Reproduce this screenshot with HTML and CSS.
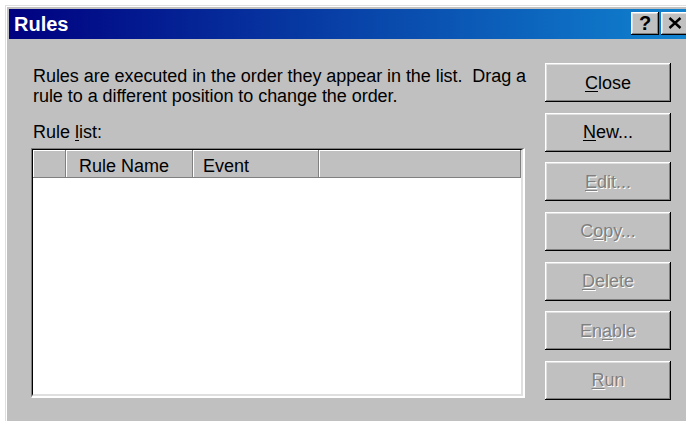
FILE: index.html
```html
<!DOCTYPE html>
<html lang="en">
<head>
<meta charset="utf-8">
<title>Rules</title>
<link rel="stylesheet" href="styles.css">
</head>
<body>
<div class="window">
  <div class="titlebar">
    <span class="title">Rules</span>
    <div class="caption-btns">
      <button class="cap-btn cap-help" type="button">?</button>
      <button class="cap-btn cap-close" type="button" aria-label="Close">
        <svg width="14" height="12" viewBox="0 0 14 12"><path d="M1.5 1 L12.5 11 M12.5 1 L1.5 11" stroke="#000" stroke-width="2.4" fill="none"/></svg>
      </button>
    </div>
  </div>
  <div class="dialog">
    <div class="main">
      <p class="intro">Rules are executed in the order they appear in the list.&nbsp; Drag a<br>rule to a different position to change the order.</p>
      <div class="label">Rule <u>l</u>ist:</div>
      <div class="listview">
        <div class="lv-inner">
          <div class="lv-header">
            <div class="col col-icon"></div>
            <div class="col col-name">Rule Name</div>
            <div class="col col-event">Event</div>
            <div class="col col-fill"></div>
          </div>
          <div class="lv-body"></div>
        </div>
      </div>
    </div>
    <div class="actions">
      <button class="btn" type="button"><u>C</u>lose</button>
      <button class="btn" type="button"><u>N</u>ew...</button>
      <button class="btn" type="button" disabled><u>E</u>dit...</button>
      <button class="btn" type="button" disabled>C<u>o</u>py...</button>
      <button class="btn" type="button" disabled><u>D</u>elete</button>
      <button class="btn" type="button" disabled>En<u>a</u>ble</button>
      <button class="btn" type="button" disabled><u>R</u>un</button>
    </div>
  </div>
</div>
</body>
</html>
```

FILE: styles.css
```css
html, body {
  margin: 0;
  height: 100%;
  overflow: hidden;
  background: #fff;
}

body {
  font-family: "Liberation Sans", Arial, sans-serif;
  color: #000;
}

/* window frame */
.window {
  margin: 5px 0 0 5px;
  width: 690px;
  height: 416px;
  box-sizing: border-box;
  border: 1px solid #dfdfdf;
  border-bottom: 0;
  box-shadow: inset 1px 1px #fff;
  padding: 3px;
  background: #c0c0c0;
}

.titlebar {
  height: 30px;
  background: linear-gradient(90deg, #000080, #1084d0);
  display: flex;
  justify-content: space-between;
  align-items: flex-start;
}

.title {
  color: #fff;
  font-weight: bold;
  font-size: 20px;
  line-height: 30px;
  padding-left: 5px;
}

.caption-btns {
  display: flex;
  gap: 2px;
  margin-top: 3px;
  margin-right: 2px;
}

.cap-btn {
  width: 28px;
  height: 23px;
  padding: 0;
  border: 0;
  background: #c0c0c0;
  box-shadow: inset -1px -1px #000, inset 1px 1px #fff, inset -2px -2px #808080, inset 2px 2px #dfdfdf;
  display: flex;
  align-items: center;
  justify-content: center;
  font-family: "Liberation Sans", Arial, sans-serif;
}

.cap-help {
  font-weight: bold;
  font-size: 20px;
  line-height: 1;
  color: #000;
  padding-bottom: 1px;
}

.cap-close svg {
  display: block;
  margin-top: -1px;
}

/* dialog body */
.dialog {
  display: flex;
  padding-left: 22px;
}

.main {
  width: 494px;
  padding-top: 27px;
}

.intro {
  margin: 0;
  padding-left: 2px;
  font-size: 18px;
  line-height: 20px;
  letter-spacing: -0.05px;
  white-space: nowrap;
}

.label {
  margin-top: 16px;
  padding-left: 2px;
  font-size: 18px;
  line-height: 20px;
}

u {
  text-decoration-thickness: 1px;
  text-underline-offset: 2px;
}

/* list view */
.listview {
  margin-top: 6px;
  height: 250px;
  box-sizing: border-box;
  border-style: solid;
  border-width: 1px 2px 2px 1px;
  border-color: #808080 #fff #fff #808080;
}

.lv-inner {
  height: 100%;
  box-sizing: border-box;
  border-style: solid;
  border-width: 1px 2px 2px 1px;
  border-color: #000 #dfdfdf #dfdfdf #000;
  background: #fff;
  display: flex;
  flex-direction: column;
}

.lv-header {
  display: flex;
  height: 28px;
  background: #c0c0c0;
}

.col {
  box-sizing: border-box;
  height: 28px;
  box-shadow: inset -1px -1px #808080, inset 1px 1px #fff;
  font-size: 18px;
  line-height: 28px;
  padding-top: 2px;
  white-space: nowrap;
}

.col-icon { width: 33px; }
.col-name { width: 127px; padding-left: 13px; }
.col-event { width: 126px; padding-left: 10px; }
.col-fill { flex: 1; }

.lv-body {
  flex: 1;
}

/* command buttons */
.actions {
  margin-left: 20px;
  padding-top: 24px;
  display: flex;
  flex-direction: column;
  gap: 10.67px;
}

.btn {
  width: 126px;
  height: 39px;
  padding: 0;
  border: 0;
  background: #c0c0c0;
  box-shadow: inset -1px -1px #000, inset 1px 1px #fff, inset -2px -2px #808080, inset 2px 2px #dfdfdf;
  font-family: "Liberation Sans", Arial, sans-serif;
  font-size: 18px;
  line-height: 20px;
  color: #000;
}

.btn:disabled {
  color: #808080;
  text-shadow: 1px 1px #fff;
}
```
